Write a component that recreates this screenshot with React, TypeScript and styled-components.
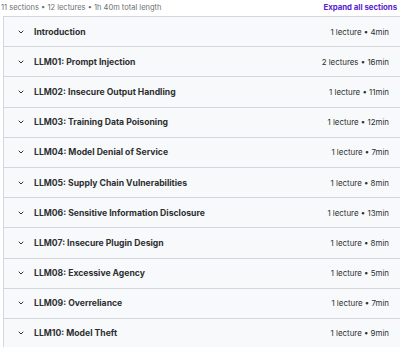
import React from "react";
import styled, { createGlobalStyle } from "styled-components";

const GlobalStyle = createGlobalStyle`
  html, body {
    margin: 0;
    padding: 0;
    background: #ffffff;
    font-family: Inter, "Noto Sans", sans-serif;
    overflow: hidden;
  }
`;

const Page = styled.div`
  width: 400px;
  height: 347px;
  overflow: hidden;
`;

const Header = styled.div`
  display: flex;
  justify-content: space-between;
  align-items: center;
  height: 14px;
  padding: 0 3px 0 1px;
  margin-bottom: 2px;
`;

const Summary = styled.span`
  font-size: 7.5px;
  color: #6a6f73;
`;

const ExpandLink = styled.span`
  font-size: 7.8px;
  font-weight: 700;
  color: #5624d0;
`;

const Accordion = styled.div`
  margin-left: 3px;
  margin-right: -4px;
  border: 1px solid #d1d7dc;
  border-bottom: none;
`;

const Row = styled.div`
  display: flex;
  align-items: center;
  height: 29.2px;
  padding: 0 14px 0 13px;
  background: #f7f9fa;
  border-bottom: 1px solid #d1d7dc;
`;

const Chevron = styled.svg`
  width: 8px;
  height: 8px;
  flex-shrink: 0;
  margin-right: 9px;
`;

const Title = styled.span`
  flex: 1;
  font-size: 8.65px;
  font-weight: 700;
  color: #2d2f31;
`;

const Meta = styled.span`
  font-size: 7.9px;
  color: #2d2f31;
`;

type Section = { title: string; meta: string };

const sections: Section[] = [
  { title: "Introduction", meta: "1 lecture • 4min" },
  { title: "LLM01: Prompt Injection", meta: "2 lectures • 16min" },
  { title: "LLM02: Insecure Output Handling", meta: "1 lecture • 11min" },
  { title: "LLM03: Training Data Poisoning", meta: "1 lecture • 12min" },
  { title: "LLM04: Model Denial of Service", meta: "1 lecture • 7min" },
  { title: "LLM05: Supply Chain Vulnerabilities", meta: "1 lecture • 8min" },
  { title: "LLM06: Sensitive Information Disclosure", meta: "1 lecture • 13min" },
  { title: "LLM07: Insecure Plugin Design", meta: "1 lecture • 8min" },
  { title: "LLM08: Excessive Agency", meta: "1 lecture • 5min" },
  { title: "LLM09: Overreliance", meta: "1 lecture • 7min" },
  { title: "LLM10: Model Theft", meta: "1 lecture • 9min" },
];

const App = () => {
  return (
    <>
      <GlobalStyle />
      <Page>
        <Header>
          <Summary>11 sections • 12 lectures • 1h 40m total length</Summary>
          <ExpandLink>Expand all sections</ExpandLink>
        </Header>
        <Accordion>
          {sections.map((s) => (
            <Row key={s.title}>
              <Chevron viewBox="0 0 24 24" fill="none">
                <path
                  d="M6 9l6 6 6-6"
                  stroke="#2d2f31"
                  strokeWidth="3"
                  strokeLinecap="round"
                  strokeLinejoin="round"
                />
              </Chevron>
              <Title>{s.title}</Title>
              <Meta>{s.meta}</Meta>
            </Row>
          ))}
        </Accordion>
      </Page>
    </>
  );
};

export default App;
